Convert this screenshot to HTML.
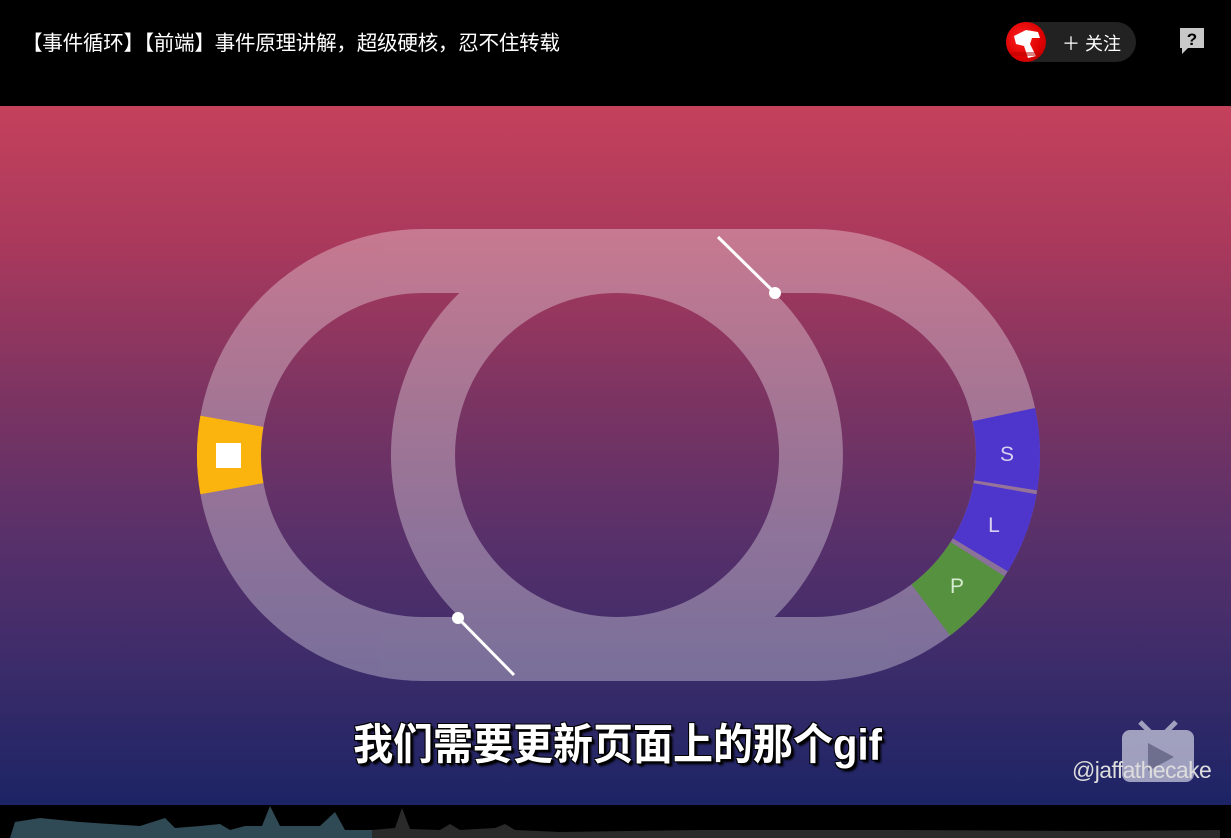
<!DOCTYPE html>
<html><head><meta charset="utf-8"><style>
html,body{margin:0;padding:0;background:#000;width:1231px;height:838px;overflow:hidden;font-family:"Liberation Sans","Noto Sans CJK SC",sans-serif}
.title{position:absolute;left:22px;top:26px;color:#fff;font-size:20.6px;white-space:nowrap;letter-spacing:-0.3px}
.video{position:absolute;left:0;top:106px;width:1231px;height:699px;background:linear-gradient(#c4415b 0%,#a9395c 20%,#7b3462 42%,#58306a 62%,#3c2c6a 80%,#1c2466 100%)}
.follow{position:absolute;left:1006px;top:22px;width:130px;height:40px;border-radius:20px;background:#222}
.av{position:absolute;left:0;top:0;width:40px;height:40px;border-radius:50%;background:radial-gradient(circle at 40% 40%,#f22 0,#d00 60%,#a00 100%);overflow:hidden}
.ft{position:absolute;left:56px;top:8px;color:#fff;font-size:18px}
.sub{position:absolute;left:0;width:1235px;top:712px;text-align:center;color:#fff;font-size:40px;font-weight:bold;text-shadow:2px 2px 0 #000,-1px -1px 0 #000,1px -1px 0 #000,-1px 1px 0 #000,3px 3px 2px #000;transform:scaleY(1.08)}
.wm{position:absolute;left:1072px;top:757px;color:#ddd;font-size:23px;letter-spacing:-0.6px}
</style></head><body>
<div class="title">【事件循环】【前端】事件原理讲解，超级硬核，忍不住转载</div>
<div class="follow"><div class="av"><svg width="40" height="40"><path d="M8 14 L20 8 L32 10 L34 16 L26 16 L24 22 L30 34 L22 36 L18 24 L10 22 Z" fill="#fff"/><rect x="0" y="30" width="40" height="4" fill="#b00" opacity=".5"/></svg></div><div class="ft">＋ 关注</div></div>
<svg style="position:absolute;left:1178px;top:26px" width="28" height="28"><path d="M2 2 H26 V22 H10 L4 28 V22 H2 Z" fill="#c8c8c8"/><text x="14" y="19" text-anchor="middle" font-size="17" font-weight="bold" fill="#000" font-family="Liberation Sans">?</text></svg>
<div class="video"></div>
<svg style="position:absolute;left:0;top:0" width="1231" height="838">
<g opacity="0.32">
<path fill="#fff" fill-rule="evenodd" d="M423 229 H814 A226 226 0 0 1 814 681 H423 A226 226 0 0 1 423 229 Z M423 293 A162 162 0 0 0 423 617 H814 A162 162 0 0 0 814 293 Z"/>
<path fill="#fff" fill-rule="evenodd" d="M617 229 A226 226 0 1 1 616.9 229 Z M617 293 A162 162 0 1 0 617.1 293 Z" />
</g>
<g fill="none" stroke-width="64">
<path d="M1003.8 414.6 A194 194 0 0 1 1005.6 485.3" stroke="#4e35cc"/>
<path d="M1005.1 488.7 A194 194 0 0 1 980.3 554.9" stroke="#4e35cc"/>
<path d="M977.6 559.2 A194 194 0 0 1 930.8 610" stroke="#56913f"/>
<path d="M231.9 488.7 A194 194 0 0 1 231.9 421.3" stroke="#fbb40d"/>
</g>
<rect x="216" y="443" width="25" height="25" fill="#fff"/>
<g fill="#d9d0f2" font-size="21" font-family="Liberation Sans" text-anchor="middle">
<text x="1007" y="461">S</text><text x="994" y="532">L</text><text x="957" y="593" fill="#d6ecd0">P</text></g>
<g stroke="#fff" stroke-width="3"><line x1="718" y1="237" x2="775" y2="293"/><line x1="458" y1="618" x2="514" y2="675"/></g>
<circle cx="775" cy="293" r="6" fill="#fff"/><circle cx="458" cy="618" r="6" fill="#fff"/>
<g opacity="0.75" fill="#c8c8dc"><rect x="1122" y="730" width="72" height="52" rx="8"/><path d="M1140 722 L1152 734 M1176 722 L1164 734" stroke="#c8c8dc" stroke-width="5"/></g>
<path d="M1148 743 L1174 757 L1148 771 Z" fill="#5a5a7a" opacity=".7"/>
<rect x="0" y="805" width="1231" height="33" fill="#000"/>
<path d="M10 838 L15 822 L40 818 L80 822 L140 826 L165 818 L175 828 L200 826 L220 824 L230 830 L245 826 L262 826 L270 806 L280 826 L320 826 L335 812 L345 830 L372 830 L372 838 Z" fill="#2f4a55"/>
<path d="M372 838 L372 830 L395 828 L402 808 L410 829 L440 830 L450 824 L460 830 L495 828 L505 824 L515 830 L560 832 L700 830 L900 830 L1100 831 L1220 830 L1220 838 Z" fill="#2a2a2a"/>
</svg>
<div class="sub">我们需要更新页面上的那个gif</div>
<div class="wm">@jaffathecake</div>
</body></html>
